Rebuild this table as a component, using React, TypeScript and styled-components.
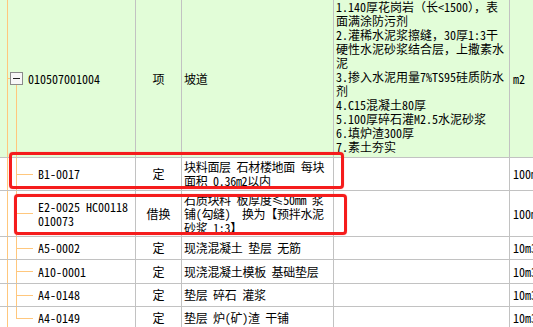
import React from "react";
import styled, { createGlobalStyle } from "styled-components";

const GRID = "#c2c2c2";
const TREE = "#ffc77d";
const GREEN = "#e2fdd8";

const Global = createGlobalStyle`
  *, *::before, *::after { box-sizing: border-box; }
  html, body { margin: 0; padding: 0; background: #fff; overflow: hidden; }
  body {
    font-family: "Noto Sans Mono CJK SC", "Noto Sans CJK SC", monospace;
    font-size: 12px;
    line-height: 14px;
    color: #000;
  }
`;

const Sheet = styled.div`
  position: relative;
  width: 533px;
  height: 327px;
  overflow: hidden;
`;

const Row = styled.div<{ $h: number; $green?: boolean }>`
  display: grid;
  grid-template-columns: 136px 46px 152px 176px 80px;
  height: ${(p) => p.$h}px;
  background: ${(p) => (p.$green ? GREEN : "#fff")};
  border-bottom: 1px solid ${GRID};
`;

const Cell = styled.div`
  display: flex;
  align-items: center;
  border-right: 1px solid ${GRID};
  overflow: hidden;
  white-space: pre;
`;

const line = (x: string, y: string, w: string, h: string) =>
  `linear-gradient(${TREE}, ${TREE}) ${x} ${y} / ${w} ${h} no-repeat`;

const CodeCell = styled(Cell)<{ $kind: "parent" | "child" | "last" }>`
  padding-left: ${(p) => (p.$kind === "parent" ? 10 : 38)}px;
  background: ${(p) =>
    p.$kind === "parent"
      ? [line("7px", "0", "1px", "100%"), line("7px", "50%", "3px", "1px")].join(", ")
      : [
          line("7px", "0", "1px", "100%"),
          line("16px", "0", "1px", p.$kind === "last" ? "50%" : "100%"),
          line("16px", "50%", "17px", "1px"),
        ].join(", ")};
`;

const Toggle = styled.div`
  align-self: stretch;
  width: 13px;
  display: flex;
  flex-direction: column;
  align-items: center;
  margin-right: 5px;
`;

const Spacer = styled.div`
  flex: 1;
`;

const Tail = styled.div`
  flex: 1;
  width: 1px;
  background: ${TREE};
`;

const MinusBox = styled.div`
  width: 13px;
  height: 13px;
  border: 1px solid #8a8a8a;
  background: #f7f7f7;
  display: flex;
  align-items: center;
  justify-content: center;
  &::after {
    content: "";
    width: 7px;
    height: 1px;
    background: #222;
  }
`;

const TypeCell = styled(Cell)`
  justify-content: center;
`;

const NameCell = styled(Cell)`
  padding-left: 2px;
  letter-spacing: -0.3px;
`;

const DescCell = styled(Cell)`
  align-items: flex-start;
  padding-left: 2px;
`;

const UnitCell = styled(Cell)`
  padding-left: 3px;
  border-right: none;
`;

const RedMark = styled.div`
  position: absolute;
  border: 3px solid #f51c1c;
  border-radius: 4px;
  box-shadow: 0 0 1px rgba(255, 60, 60, 0.7);
  pointer-events: none;
`;

type Item = {
  code: string;
  type: string;
  name: string;
  unit: string;
  h: number;
  last?: boolean;
};

const items: Item[] = [
  { code: "B1-0017", type: "定", name: "块料面层 石材楼地面 每块\n面积 0.36m2以内", unit: "100m2", h: 33 },
  {
    code: "E2-0025 HC00118\n010073",
    type: "借换",
    name: "石质块料 板厚度≤50mm 浆\n铺(勾缝)  换为【预拌水泥\n砂浆 1:3】",
    unit: "100m2",
    h: 46,
  },
  { code: "A5-0002", type: "定", name: "现浇混凝土 垫层 无筋", unit: "10m3", h: 23 },
  { code: "A10-0001", type: "定", name: "现浇混凝土模板 基础垫层", unit: "10m3", h: 24 },
  { code: "A4-0148", type: "定", name: "垫层 碎石 灌浆", unit: "10m3", h: 23 },
  { code: "A4-0149", type: "定", name: "垫层 炉(矿)渣 干铺", unit: "10m3", h: 23, last: true },
];

const desc = [
  "1.140厚花岗岩（长<1500），表",
  "面满涂防污剂",
  "2.灌稀水泥浆擦缝，30厚1:3干",
  "硬性水泥砂浆结合层，上撒素水",
  "泥",
  "3.掺入水泥用量7%TS95硅质防水",
  "剂",
  "4.C15混凝土80厚",
  "5.100厚碎石灌M2.5水泥砂浆",
  "6.填炉渣300厚",
  "7.素土夯实",
].join("\n");

export default function App() {
  return (
    <>
      <Global />
      <Sheet>
        <Row $h={158} $green>
          <CodeCell $kind="parent">
            <Toggle>
              <Spacer />
              <MinusBox />
              <Tail />
            </Toggle>
            010507001004
          </CodeCell>
          <TypeCell>项</TypeCell>
          <NameCell>坡道</NameCell>
          <DescCell>{desc}</DescCell>
          <UnitCell>m2</UnitCell>
        </Row>
        {items.map((it) => (
          <Row key={it.code} $h={it.h}>
            <CodeCell $kind={it.last ? "last" : "child"}>{it.code}</CodeCell>
            <TypeCell>{it.type}</TypeCell>
            <NameCell>{it.name}</NameCell>
            <DescCell />
            <UnitCell>{it.unit}</UnitCell>
          </Row>
        ))}
        <RedMark style={{ left: 9, top: 152, width: 335, height: 37 }} />
        <RedMark style={{ left: 14, top: 194, width: 333, height: 41 }} />
      </Sheet>
    </>
  );
}
